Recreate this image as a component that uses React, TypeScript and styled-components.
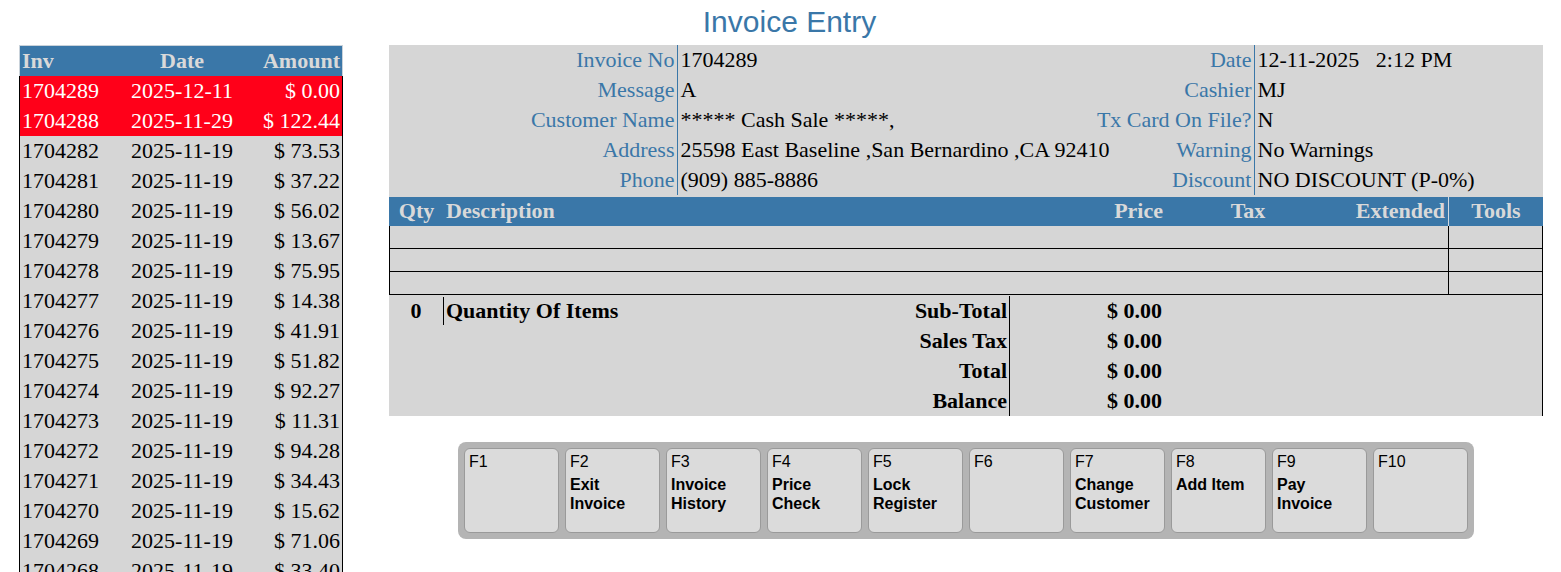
import React from 'react';
import styled, { createGlobalStyle } from 'styled-components';

const BLUE = '#3a77a8';
const GRAY = '#d6d6d6';

const GlobalStyle = createGlobalStyle`
  body {
    margin: 0;
    font-family: 'Liberation Serif', 'Times New Roman', serif;
    background: #fff;
  }
`;

const Page = styled.div`
  padding: 0 18px 0 19px;
`;

const Title = styled.h1`
  margin: 0;
  height: 45px;
  line-height: 44px;
  padding-left: 17px;
  text-align: center;
  font-family: 'Liberation Sans', Arial, sans-serif;
  font-weight: normal;
  font-size: 30px;
  color: ${BLUE};
`;

const Body = styled.div`
  display: flex;
  align-items: flex-start;
  gap: 46px;
`;

// Left invoice list
const Sidebar = styled.div`
  width: 324px;
  flex: none;
`;

const ListRow = styled.div<{ $head?: boolean; $hot?: boolean }>`
  display: grid;
  grid-template-columns: 100px 124px 1fr;
  height: ${(p) => (p.$head ? 31 : 30)}px;
  line-height: ${(p) => (p.$head ? 29 : 30)}px;
  font-size: 22px;
  font-weight: ${(p) => (p.$head ? 'bold' : 'normal')};
  background: ${(p) => (p.$head ? BLUE : p.$hot ? '#ff0019' : GRAY)};
  color: ${(p) => (p.$head ? '#d9d9d9' : p.$hot ? '#fff' : '#000')};
  border-left: 1px solid ${(p) => (p.$head ? '#c9d2da' : '#000')};
  border-right: 1px solid ${(p) => (p.$head ? '#c9d2da' : '#000')};
  border-top: ${(p) => (p.$head ? '1px solid #c9d2da' : 'none')};
  box-sizing: border-box;
`;

const ListCell = styled.div<{ $align: 'left' | 'center' | 'right' }>`
  text-align: ${(p) => p.$align};
  padding: 0 2px;
  white-space: nowrap;
`;

// Right invoice panel
const Main = styled.div`
  flex: 1;
  min-width: 0;
`;

const InfoGrid = styled.div`
  display: grid;
  grid-template-columns: repeat(4, minmax(0, 1fr));
  background: ${GRAY};
  font-size: 22px;
  padding-bottom: 2px;
`;

const InfoLabel = styled.div`
  height: 30px;
  line-height: 30px;
  text-align: right;
  padding-right: 2px;
  color: ${BLUE};
  border-right: 1px solid ${BLUE};
  white-space: nowrap;
`;

const InfoValue = styled.div`
  height: 30px;
  line-height: 30px;
  padding-left: 3px;
  color: #000;
  white-space: pre;
`;

const COLS = '55px 566px 156px 164px 118px 1fr';

const ItemHead = styled.div`
  display: grid;
  grid-template-columns: ${COLS};
  height: 29px;
  line-height: 28px;
  background: ${BLUE};
  color: #d9d9d9;
  font-size: 22px;
  font-weight: bold;
`;

const HeadCell = styled.div<{ $align: 'left' | 'center' | 'right'; $sep?: boolean }>`
  text-align: ${(p) => p.$align};
  padding: 0 ${(p) => (p.$align === 'right' ? 3 : 2)}px 0 2px;
  border-left: ${(p) => (p.$sep ? '1px solid #d0d8e0' : 'none')};
`;

const ItemRows = styled.div`
  border-left: 1px solid #000;
  border-right: 1px solid #000;
`;

const ItemRow = styled.div`
  display: grid;
  grid-template-columns: 55px 566px 156px 164px 117px 1fr;
  height: 22px;
  background: ${GRAY};
  border-bottom: 1px solid #000;
`;

const ToolsCell = styled.div`
  grid-column: 6;
  border-left: 1px solid #000;
`;

const Totals = styled.div`
  background: ${GRAY};
  border-right: 1px solid #000;
  padding-top: 1px;
  font-size: 22px;
  font-weight: bold;
`;

const TotalRow = styled.div`
  display: grid;
  grid-template-columns: 55px 566px 155px 1fr;
  height: 30px;
  line-height: 30px;
`;

const QtyCell = styled.div<{ $line?: boolean }>`
  text-align: center;
  margin: 1px 0;
  line-height: 28px;
  border-right: ${(p) => (p.$line ? '1px solid #000' : 'none')};
`;

const DescCell = styled.div`
  display: flex;
  justify-content: space-between;
  padding: 0 2px 0 2px;
  border-right: 1px solid #000;
`;

const AmountCell = styled.div`
  text-align: right;
  padding-right: 3px;
`;

// Function key bar
const KeyBar = styled.div`
  display: flex;
  gap: 6px;
  width: fit-content;
  margin: 26px auto 0;
  padding: 6px;
  background: #b4b4b4;
  border-radius: 8px;
`;

const Key = styled.div`
  width: 95px;
  height: 85px;
  box-sizing: border-box;
  padding: 4px 4px;
  background: #dbdbdb;
  border: 1px solid #9a9a9a;
  border-radius: 6px;
  font-family: 'Liberation Sans', Arial, sans-serif;
  font-size: 16px;
  color: #000;
`;

const KeyCode = styled.div`
  line-height: 18px;
`;

const KeyLabel = styled.div`
  margin-top: 4px;
  font-weight: bold;
  line-height: 19px;
`;

const invoices = [
  ['1704289', '2025-12-11', '$ 0.00', true],
  ['1704288', '2025-11-29', '$ 122.44', true],
  ['1704282', '2025-11-19', '$ 73.53'],
  ['1704281', '2025-11-19', '$ 37.22'],
  ['1704280', '2025-11-19', '$ 56.02'],
  ['1704279', '2025-11-19', '$ 13.67'],
  ['1704278', '2025-11-19', '$ 75.95'],
  ['1704277', '2025-11-19', '$ 14.38'],
  ['1704276', '2025-11-19', '$ 41.91'],
  ['1704275', '2025-11-19', '$ 51.82'],
  ['1704274', '2025-11-19', '$ 92.27'],
  ['1704273', '2025-11-19', '$ 11.31'],
  ['1704272', '2025-11-19', '$ 94.28'],
  ['1704271', '2025-11-19', '$ 34.43'],
  ['1704270', '2025-11-19', '$ 15.62'],
  ['1704269', '2025-11-19', '$ 71.06'],
  ['1704268', '2025-11-19', '$ 33.40'],
] as [string, string, string, boolean?][];

const info = [
  ['Invoice No', '1704289', 'Date', '12-11-2025   2:12 PM'],
  ['Message', 'A', 'Cashier', 'MJ'],
  ['Customer Name', '***** Cash Sale *****,', 'Tx Card On File?', 'N'],
  ['Address', '25598 East Baseline ,San Bernardino ,CA 92410', 'Warning', 'No Warnings'],
  ['Phone', '(909) 885-8886', 'Discount', 'NO DISCOUNT (P-0%)'],
];

const totals = [
  ['Sub-Total', '$ 0.00'],
  ['Sales Tax', '$ 0.00'],
  ['Total', '$ 0.00'],
  ['Balance', '$ 0.00'],
];

const keys: [string, string[]][] = [
  ['F1', []],
  ['F2', ['Exit', 'Invoice']],
  ['F3', ['Invoice', 'History']],
  ['F4', ['Price', 'Check']],
  ['F5', ['Lock', 'Register']],
  ['F6', []],
  ['F7', ['Change', 'Customer']],
  ['F8', ['Add Item']],
  ['F9', ['Pay', 'Invoice']],
  ['F10', []],
];

const App: React.FC = () => {
  return (
    <Page>
      <GlobalStyle />
      <Title>Invoice Entry</Title>
      <Body>
        <Sidebar>
          <ListRow $head>
            <ListCell $align="left">Inv</ListCell>
            <ListCell $align="center">Date</ListCell>
            <ListCell $align="right">Amount</ListCell>
          </ListRow>
          {invoices.map(([inv, date, amount, hot]) => (
            <ListRow key={inv} $hot={hot}>
              <ListCell $align="left">{inv}</ListCell>
              <ListCell $align="center">{date}</ListCell>
              <ListCell $align="right">{amount}</ListCell>
            </ListRow>
          ))}
        </Sidebar>

        <Main>
          <InfoGrid>
            {info.map(([l1, v1, l2, v2]) => (
              <React.Fragment key={l1}>
                <InfoLabel>{l1}</InfoLabel>
                <InfoValue>{v1}</InfoValue>
                <InfoLabel>{l2}</InfoLabel>
                <InfoValue>{v2}</InfoValue>
              </React.Fragment>
            ))}
          </InfoGrid>

          <ItemHead>
            <HeadCell $align="center">Qty</HeadCell>
            <HeadCell $align="left">Description</HeadCell>
            <HeadCell $align="right">Price</HeadCell>
            <HeadCell $align="center">Tax</HeadCell>
            <HeadCell $align="right">Extended</HeadCell>
            <HeadCell $align="center" $sep>Tools</HeadCell>
          </ItemHead>
          <ItemRows>
            {[0, 1, 2].map((i) => (
              <ItemRow key={i}>
                <ToolsCell />
              </ItemRow>
            ))}
          </ItemRows>

          <Totals>
            {totals.map(([label, value], i) => (
              <TotalRow key={label}>
                <QtyCell $line={i === 0}>{i === 0 ? '0' : ''}</QtyCell>
                <DescCell>
                  <span>{i === 0 ? 'Quantity Of Items' : ''}</span>
                  <span>{label}</span>
                </DescCell>
                <AmountCell>{value}</AmountCell>
              </TotalRow>
            ))}
          </Totals>

          <KeyBar>
            {keys.map(([code, label]) => (
              <Key key={code}>
                <KeyCode>{code}</KeyCode>
                {label.length > 0 && (
                  <KeyLabel>
                    {label.map((line) => (
                      <div key={line}>{line}</div>
                    ))}
                  </KeyLabel>
                )}
              </Key>
            ))}
          </KeyBar>
        </Main>
      </Body>
    </Page>
  );
};

export default App;
